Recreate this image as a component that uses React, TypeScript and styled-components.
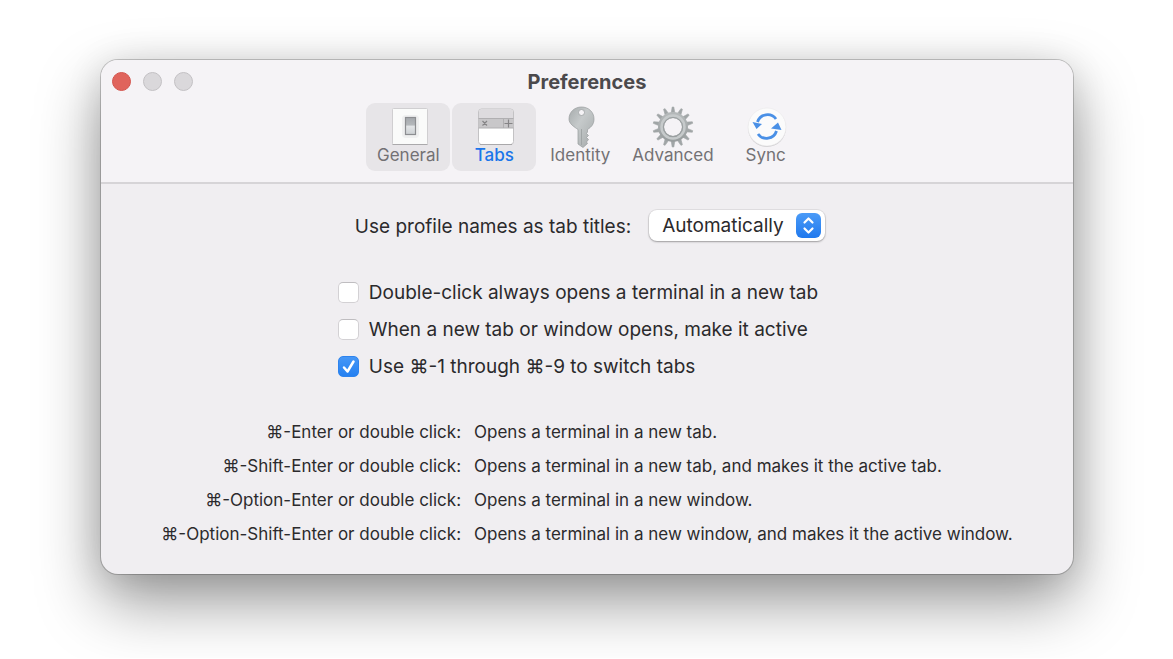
import React from 'react';
import styled, { createGlobalStyle } from 'styled-components';

const GlobalStyle = createGlobalStyle`
  *, *::before, *::after { box-sizing: border-box; }
  body {
    margin: 0;
    background: #fff;
    color: #2b2a2c;
    font-family: Inter, "DejaVu Sans", sans-serif;
    font-optical-sizing: none;
  }
`;

const Desktop = styled.main`
  padding: 60px 100px 84px 101px;
`;

const Window = styled.section`
  border-radius: 17px;
  background: #f0eef1;
  box-shadow:
    0 0 0 1px rgba(0, 0, 0, 0.2),
    0 28px 64px rgba(0, 0, 0, 0.4),
    0 4px 36px rgba(0, 0, 0, 0.12);
`;

const Header = styled.header`
  padding-bottom: 11px;
  border-bottom: 2px solid #d6d4d7;
  border-radius: 17px 17px 0 0;
  background: #f5f3f6;
`;

const TitleBar = styled.div`
  display: grid;
  grid-template-columns: 1fr auto 1fr;
  align-items: center;
  height: 43px;
  padding: 0 11px;
`;

const WindowButtons = styled.div`
  display: flex;
  gap: 12px;
`;

const WindowButton = styled.button<{ $fill: string; $edge: string }>`
  width: 19px;
  height: 19px;
  padding: 0;
  border: 1px solid ${(p) => p.$edge};
  border-radius: 50%;
  background: ${(p) => p.$fill};
`;

const Title = styled.h1`
  margin: 0;
  color: #4b494c;
  font-size: 20px;
  font-weight: 700;
  line-height: 24px;
`;

const Toolbar = styled.nav`
  display: flex;
  justify-content: center;
  gap: 2px;
`;

const ToolButton = styled.button<{ $shaded?: boolean; $selected?: boolean }>`
  display: flex;
  flex-direction: column;
  align-items: center;
  min-width: 84px;
  height: 68px;
  padding: 3px 8px 0;
  border: 0;
  border-radius: 9px;
  background: ${(p) => (p.$shaded ? '#e7e5e8' : 'transparent')};
  color: ${(p) => (p.$selected ? '#1a75ea' : '#737174')};
  font-family: inherit;
  font-size: 17px;
  font-weight: ${(p) => (p.$selected ? 500 : 400)};
  line-height: 18px;

  svg {
    display: block;
    width: 42px;
    height: 42px;
    margin-bottom: -2px;
  }
`;

const Panel = styled.div`
  display: flex;
  flex-direction: column;
  align-items: center;
  padding: 26px 24px 23px;
`;

const TitleSetting = styled.div`
  display: flex;
  align-items: center;
  gap: 18px;
  padding-left: 6px;
  font-size: 19px;
  line-height: 24px;

  label { padding-top: 2px; }
`;

const SelectBox = styled.div`
  position: relative;
  width: 176px;

  svg {
    position: absolute;
    top: 3px;
    right: 4px;
    width: 25px;
    height: 25px;
    pointer-events: none;
  }
`;

const Select = styled.select`
  display: block;
  width: 100%;
  height: 31px;
  padding: 0 32px 0 13px;
  appearance: none;
  border: 0;
  border-radius: 8px;
  background: #fff;
  box-shadow: 0 0 0 1px rgba(0, 0, 0, 0.06), 0 1px 2px rgba(0, 0, 0, 0.3);
  color: inherit;
  font: inherit;
`;

const Options = styled.div`
  display: flex;
  flex-direction: column;
  gap: 13px;
  margin: 40px 18px 0 0;
`;

const Option = styled.label`
  display: flex;
  align-items: center;
  gap: 10px;
  font-size: 19px;
  line-height: 24px;
`;

const CheckCell = styled.span`
  display: grid;
  width: 21px;
  height: 22px;

  > * { grid-area: 1 / 1; }

  svg {
    width: 21px;
    height: 21px;
    pointer-events: none;
    visibility: hidden;
  }

  input:checked + svg { visibility: visible; }
`;

const Checkbox = styled.input`
  width: 21px;
  height: 21px;
  margin: 0;
  appearance: none;
  border: 1px solid #d3d1d4;
  border-top-color: #bfbdc0;
  border-radius: 5px;
  background: #fff;

  &:checked {
    border-color: #2d83ee;
    background: linear-gradient(#4697f6, #2480f1);
  }
`;

const Shortcuts = styled.dl`
  display: grid;
  grid-template-columns: auto auto;
  column-gap: 13px;
  margin: 36px 0 0;
  font-size: 17px;
  line-height: 34px;
`;

const Keys = styled.dt`
  text-align: right;
`;

const Effect = styled.dd`
  margin: 0;
`;

const GeneralIcon = () => (
  <svg viewBox="0 0 42 42" aria-hidden="true">
    <defs>
      <linearGradient id="rocker" x1="0" y1="0" x2="0" y2="1">
        <stop offset="0" stopColor="#a4a8ac" />
        <stop offset="0.45" stopColor="#b5b9bc" />
        <stop offset="0.5" stopColor="#e3e6e8" />
        <stop offset="1" stopColor="#ccd0d3" />
      </linearGradient>
    </defs>
    <rect x="5.5" y="2.5" width="35" height="36" rx="1" fill="#fafbfa" stroke="#d0cfd1" />
    <path d="M5.5 38.5h35" stroke="#aaa9ab" />
    <rect x="15" y="9" width="17" height="23" rx="4" fill="#eff0f0" />
    <rect x="18.5" y="11.5" width="10" height="17" fill="url(#rocker)" stroke="#8c8e91" strokeWidth="1.2" />
  </svg>
);

const TabsIcon = () => (
  <svg viewBox="0 0 42 42" aria-hidden="true">
    <rect x="5.5" y="3" width="35" height="35.5" rx="3" fill="#fff" stroke="#c3c2c4" />
    <path d="M6 12V6q0-3 3-3h28q3 0 3 3v6z" fill="#dddbde" />
    <path d="M6 12h34v10H6z" fill="#c8c7c9" />
    <path d="M5.5 12.5h35M5.5 22h35M30.5 12.5V22" fill="none" stroke="#b0afb1" />
    <path d="M9.5 15l4.5 4.5m0-4.5l-4.5 4.5M35.5 13.5v8M31.5 17.5h8" fill="none" stroke="#858486" strokeWidth="1.2" />
    <path d="M7 38.5h32" stroke="#a9a8aa" />
  </svg>
);

const KeyIcon = () => (
  <svg viewBox="0 0 42 42" aria-hidden="true">
    <defs>
      <linearGradient id="key" x1="0" y1="0" x2="1" y2="1">
        <stop offset="0" stopColor="#a6abac" />
        <stop offset="0.4" stopColor="#c6cacb" />
        <stop offset="1" stopColor="#a4a9aa" />
      </linearGradient>
    </defs>
    <path
      fillRule="evenodd"
      d="M22.5 1C29.5 1 35 6 35 13c0 5-2.5 8-6.5 10.5v2.5l-1 1.5 2 2-2 2 2 2-2 2.5 1 1.5-4.5 4-5-3.5V23.5C15.5 21 10 18 10 13 10 6 15.5 1 22.5 1zM22.5 3.5a3 3 0 1 0 0 6 3 3 0 0 0 0-6z"
      fill="url(#key)"
      stroke="#969b9c"
      strokeWidth="0.7"
    />
    <path d="M22.5 23v16" stroke="#a0a5a6" />
  </svg>
);

const teeth = Array.from({ length: 14 }, (_, i) => (i * 360) / 14);

const GearIcon = () => (
  <svg viewBox="0 0 42 42" aria-hidden="true">
    <defs>
      <linearGradient id="gear" x1="0" y1="0" x2="0" y2="1">
        <stop offset="0" stopColor="#b4b8b9" />
        <stop offset="1" stopColor="#999e9f" />
      </linearGradient>
    </defs>
    {teeth.map((angle) => (
      <path key={angle} d="M19 8l1.2-7h1.6l1.2 7z" fill="#a0a5a6" stroke="#a0a5a6" strokeWidth="0.6" transform={`rotate(${angle} 21 21)`} />
    ))}
    <circle cx="21" cy="21" r="12" fill="none" stroke="url(#gear)" strokeWidth="6" />
    <circle cx="21" cy="21" r="11.5" fill="none" stroke="#c6cacb" strokeWidth="2.5" />
    <circle cx="21" cy="21" r="9.5" fill="none" stroke="#9a9fa0" strokeWidth="1" />
  </svg>
);

const SyncIcon = () => (
  <svg viewBox="0 0 42 42" aria-hidden="true">
    <circle cx="22" cy="22" r="19" fill="#cfced0" />
    <circle cx="22" cy="21" r="19" fill="#fbfbfb" stroke="#e9e8ea" strokeWidth="0.6" />
    <path d="M12.5 16a10.500 10.500 0 0 1 18.500-3M31.500 25a10.500 10.500 0 0 1-18.500 3" fill="none" stroke="#4a90e6" strokeWidth="2.8" />
    <path d="M7.500 16l9.500 2-5.500 5zM36.500 24l-10.500-1.500 7-6z" fill="#4a90e6" />
  </svg>
);

const tools = [
  { label: 'General', icon: <GeneralIcon />, shaded: true },
  { label: 'Tabs', icon: <TabsIcon />, shaded: true, selected: true },
  { label: 'Identity', icon: <KeyIcon /> },
  { label: 'Advanced', icon: <GearIcon /> },
  { label: 'Sync', icon: <SyncIcon /> },
];

const options = [
  { label: 'Double-click always opens a terminal in a new tab', on: false },
  { label: 'When a new tab or window opens, make it active', on: false },
  { label: 'Use ⌘-1 through ⌘-9 to switch tabs', on: true },
];

const shortcuts = [
  ['⌘-Enter or double click:', 'Opens a terminal in a new tab.'],
  ['⌘-Shift-Enter or double click:', 'Opens a terminal in a new tab, and makes it the active tab.'],
  ['⌘-Option-Enter or double click:', 'Opens a terminal in a new window.'],
  ['⌘-Option-Shift-Enter or double click:', 'Opens a terminal in a new window, and makes it the active window.'],
];

export default function App() {
  return (
    <>
      <GlobalStyle />
      <Desktop>
        <Window>
          <Header>
            <TitleBar>
              <WindowButtons>
                <WindowButton aria-label="Close" $fill="#e0645c" $edge="#d4554e" />
                <WindowButton aria-label="Minimize" $fill="#dad8db" $edge="#c3c1c4" />
                <WindowButton aria-label="Zoom" $fill="#dad8db" $edge="#c3c1c4" />
              </WindowButtons>
              <Title>Preferences</Title>
            </TitleBar>
            <Toolbar>
              {tools.map((t) => (
                <ToolButton key={t.label} $shaded={t.shaded} $selected={t.selected}>
                  {t.icon}
                  {t.label}
                </ToolButton>
              ))}
            </Toolbar>
          </Header>
          <Panel>
            <TitleSetting>
              <label htmlFor="tab-titles">Use profile names as tab titles:</label>
              <SelectBox>
                <Select id="tab-titles" defaultValue="auto">
                  <option value="auto">Automatically</option>
                </Select>
                <svg viewBox="0 0 25 25" aria-hidden="true">
                  <defs>
                    <linearGradient id="stepper" x1="0" y1="0" x2="0" y2="1">
                      <stop offset="0" stopColor="#4b9bf7" />
                      <stop offset="1" stopColor="#2079ee" />
                    </linearGradient>
                  </defs>
                  <rect width="25" height="25" rx="6" fill="url(#stepper)" />
                  <path d="M8.5 9.5l4-4 4 4M8.5 15.5l4 4 4-4" fill="none" stroke="#fff" strokeWidth="2.2" strokeLinecap="round" strokeLinejoin="round" />
                </svg>
              </SelectBox>
            </TitleSetting>
            <Options>
              {options.map((o) => (
                <Option key={o.label}>
                  <CheckCell>
                    <Checkbox type="checkbox" defaultChecked={o.on} />
                    <svg viewBox="0 0 21 21" aria-hidden="true">
                      <path d="M6 11.5l3.5 4L15.5 5.5" fill="none" stroke="#fff" strokeWidth="2.5" strokeLinecap="round" strokeLinejoin="round" />
                    </svg>
                  </CheckCell>
                  {o.label}
                </Option>
              ))}
            </Options>
            <Shortcuts>
              {shortcuts.map(([keys, effect]) => (
                <React.Fragment key={keys}>
                  <Keys>{keys}</Keys>
                  <Effect>{effect}</Effect>
                </React.Fragment>
              ))}
            </Shortcuts>
          </Panel>
        </Window>
      </Desktop>
    </>
  );
}
